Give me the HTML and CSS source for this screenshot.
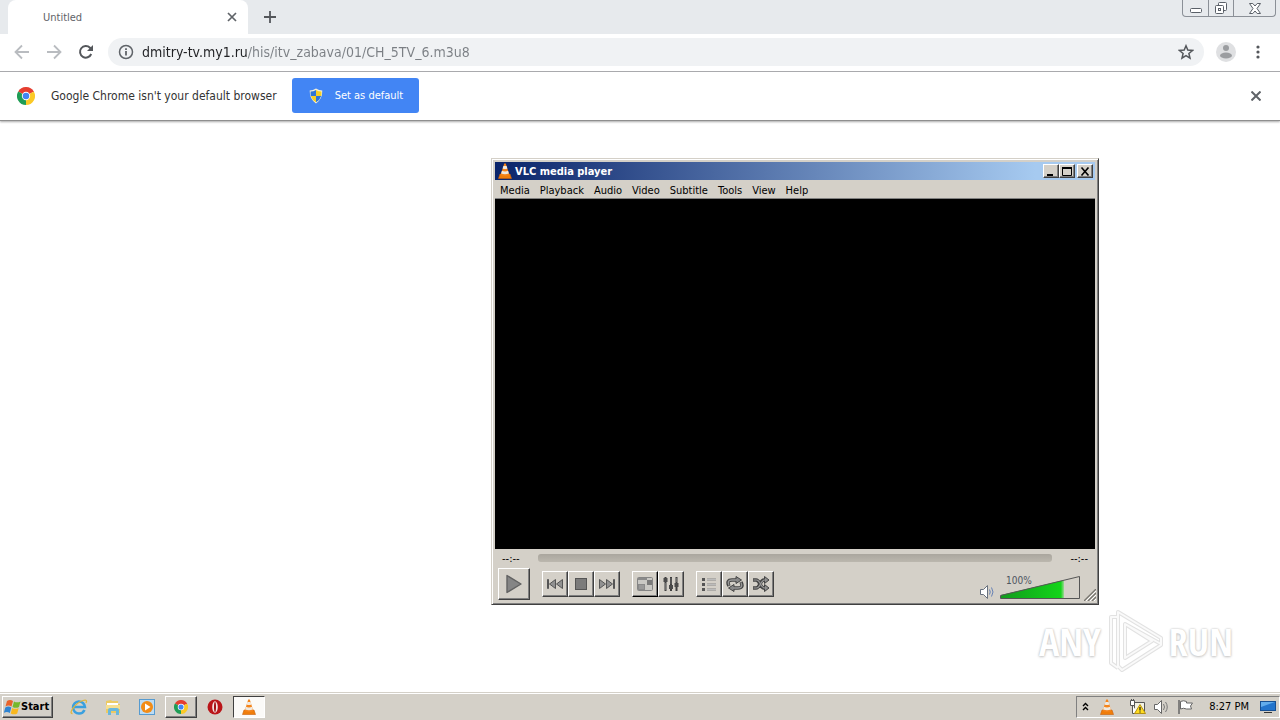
FILE: index.html
```html
<!DOCTYPE html>
<html lang="en">
<head>
    <meta charset="UTF-8">
    <meta name="viewport" content="width=device-width, initial-scale=1.0">
    <title>Untitled</title>
    <link rel="stylesheet" href="styles.css">
</head>
<body>
    <!-- shared icons -->
    <svg class="icon-defs" aria-hidden="true">
        <symbol id="cone" viewBox="0 0 16 16">
            <path d="M3 11h10l1.500 4.500h-13z" fill="#f07d0a" stroke="#c9600a" stroke-width=".6"/>
            <path d="M7.200 .5h1.600l3.600 11.500q-4.400 2.200-8.800 0z" fill="#f5841a"/>
            <path d="M6.400 3h3.200l.8 2.600q-2.400 1-4.800 0zM4.900 7.800q3.100 1.200 6.200 0l.8 2.600q-3.900 1.600-7.800 0z" fill="#f0e9df"/>
        </symbol>
        <symbol id="chrome" viewBox="0 0 16 16">
            <path d="M8 8L1.070 4A8 8 0 0 1 14.930 4z" fill="#e53e30"/>
            <path d="M8 8l6.930-4A8 8 0 0 1 8 16z" fill="#fbc926"/>
            <path d="M8 8v8A8 8 0 0 1 1.070 4z" fill="#1f9d55"/>
            <path d="M8 4.200h6.930L14.500 3.500H8z" fill="#e53e30"/>
            <circle cx="8" cy="8" r="3.700" fill="#fff"/>
            <circle cx="8" cy="8" r="2.900" fill="#4285f4"/>
        </symbol>
    </svg>

    <!-- browser -->
    <header class="tab-strip">
        <div class="tab">
            <span class="tab-title">Untitled</span>
            <button class="icon-button tab-close" aria-label="Close tab">
                <svg width="10" height="10" viewBox="0 0 10 10"><path d="M1 1l8 8M9 1L1 9" stroke="#5f6368" stroke-width="1.700"/></svg>
            </button>
        </div>
        <button class="icon-button new-tab" aria-label="New tab">
            <svg width="12" height="12" viewBox="0 0 12 12"><path d="M6 0v12M0 6h12" stroke="#54575b" stroke-width="1.800"/></svg>
        </button>
        <div class="window-buttons">
            <button class="window-button" aria-label="Minimize">
                <svg width="14" height="14" viewBox="0 0 14 14"><rect x="1.500" y="7.500" width="11" height="4" rx="1" fill="#fff" stroke="#5a6068"/></svg>
            </button>
            <button class="window-button" aria-label="Restore">
                <svg width="14" height="14" viewBox="0 0 14 14"><rect x="4.500" y="1.500" width="8" height="8" rx="1" fill="#fff" stroke="#5a6068"/><rect x="1.500" y="4.500" width="8" height="8" rx="1" fill="#fff" stroke="#5a6068"/><rect x="4.500" y="7.500" width="2" height="2" fill="none" stroke="#5a6068"/></svg>
            </button>
            <button class="window-button wide" aria-label="Close">
                <svg width="14" height="14" viewBox="0 0 14 14"><path d="M1.500 2.500h3.300L7 5l2.200-2.500h3.300L9 7.500l3.500 5H9.200L7 10l-2.200 2.500H1.500l3.500-5z" fill="#fff" stroke="#5a6068"/></svg>
            </button>
        </div>
    </header>

    <nav class="toolbar">
        <button class="icon-button" aria-label="Back">
            <svg width="16" height="16" viewBox="0 0 16 16"><path d="M15 8H2M8 1.500L1.500 8 8 14.500" fill="none" stroke="#b9bcc0" stroke-width="1.800"/></svg>
        </button>
        <button class="icon-button" aria-label="Forward">
            <svg width="16" height="16" viewBox="0 0 16 16"><path d="M1 8h13M8 1.500L14.500 8 8 14.500" fill="none" stroke="#b9bcc0" stroke-width="1.800"/></svg>
        </button>
        <button class="icon-button" aria-label="Reload">
            <svg width="16" height="16" viewBox="0 0 16 16"><path d="M13.200 10A5.800 5.800 0 1 1 12 3.800L13.500 5.500" fill="none" stroke="#54575b" stroke-width="2"/><path d="M15 1v6H9z" fill="#54575b"/></svg>
        </button>
        <div class="address-bar">
            <svg width="16" height="16" viewBox="0 0 16 16"><circle cx="8" cy="8" r="6.500" fill="none" stroke="#5f6368" stroke-width="1.500"/><path d="M8 7v4.500M8 4.200v1.700" stroke="#5f6368" stroke-width="1.800"/></svg>
            <input class="address" type="text" aria-label="Address" value="dmitry-tv.my1.ru/his/itv_zabava/01/CH_5TV_6.m3u8">
            <button class="icon-button star" aria-label="Bookmark">
                <svg width="16" height="16" viewBox="0 0 16 16"><path d="M8 1.800l1.800 4.300 4.700.4-3.600 3 1.100 4.600L8 11.600l-4 2.500 1.100-4.600-3.600-3 4.700-.4z" fill="none" stroke="#54575b" stroke-width="1.500"/></svg>
            </button>
        </div>
        <button class="icon-button profile" aria-label="Profile">
            <svg width="20" height="20" viewBox="0 0 20 20"><circle cx="10" cy="10" r="10" fill="#dfe0e2"/><circle cx="10" cy="6" r="3" fill="#9b9da0"/><ellipse cx="10" cy="13.500" rx="6" ry="3" fill="#9b9da0"/></svg>
        </button>
        <button class="icon-button more" aria-label="Menu">
            <svg width="4" height="14" viewBox="0 0 4 14" fill="#54575b"><circle cx="2" cy="2" r="1.600"/><circle cx="2" cy="7" r="1.600"/><circle cx="2" cy="12" r="1.600"/></svg>
        </button>
    </nav>

    <div class="infobar">
        <svg width="18" height="18"><use href="#chrome"/></svg>
        <span class="infobar-text">Google Chrome isn't your default browser</span>
        <button class="default-button">
            <svg width="14" height="16" viewBox="0 0 14 16"><path d="M7 .5q3 2 6.300 2Q13.500 11 7 15.500.5 11 .7 2.500 4 2.500 7 .5z" fill="#f3f0d8"/><path d="M7 2v6H1.800q-.4-2-.2-4.500Q4.500 3.500 7 2zM7 8h5.200Q11 12 7 14.300z" fill="#2f75d6"/><path d="M7 2q2.500 1.500 5.400 1.500.2 2.500-.2 4.500H7zM7 8v6.300Q3 12 1.800 8z" fill="#f6cf25"/></svg>
            Set as default
        </button>
        <button class="icon-button infobar-close" aria-label="Dismiss">
            <svg width="10" height="10" viewBox="0 0 10 10"><path d="M.5.5l9 9M9.500.5l-9 9" stroke="#5f6368" stroke-width="2"/></svg>
        </button>
    </div>

    <main class="page"></main>

    <!-- media player window -->
    <section class="player">
        <div class="player-title">
            <svg width="16" height="16"><use href="#cone"/></svg>
            <span>VLC media player</span>
            <div class="title-buttons">
                <button class="raised title-button" aria-label="Minimize"><svg width="10" height="9" viewBox="0 0 10 9"><path d="M1 7h6v2H1z"/></svg></button>
                <button class="raised title-button" aria-label="Maximize"><svg width="10" height="9" viewBox="0 0 10 9"><path d="M.5 1h9M.5.500v8h9v-8" fill="none" stroke="#000"/><path d="M0 0h10v2H0z"/></svg></button>
                <button class="raised title-button close" aria-label="Close"><svg width="10" height="9" viewBox="0 0 10 9"><path d="M1.500.5l7 8M8.500.5l-7 8" stroke="#000" stroke-width="1.600"/></svg></button>
            </div>
        </div>
        <div class="menu-bar">
            <button>Media</button>
            <button>Playback</button>
            <button>Audio</button>
            <button>Video</button>
            <button>Subtitle</button>
            <button>Tools</button>
            <button>View</button>
            <button>Help</button>
        </div>
        <div class="video"></div>
        <div class="seek-row">
            <span>--:--</span>
            <input class="seek" type="range" aria-label="Position" value="0">
            <span>--:--</span>
        </div>
        <div class="controls">
            <button class="raised play" aria-label="Play">
                <svg width="18" height="20" viewBox="0 0 18 20"><path d="M2 1.500L16 10 2 18.500z" fill="#858585" stroke="#626262" stroke-width="1.400" stroke-linejoin="round"/></svg>
            </button>
            <div class="button-group">
                <button class="raised control" aria-label="Previous">
                    <svg width="18" height="12" viewBox="0 0 18 12" fill="#919191" stroke="#555"><path d="M1.500 1.500v9h1v-9zM9.500 1.500v9L3.500 6zM16.500 1.500v9L10.500 6z"/></svg>
                </button>
                <button class="raised control" aria-label="Stop">
                    <svg width="14" height="14" viewBox="0 0 14 14"><rect x="1.500" y="1.500" width="11" height="11" fill="#7b7b7b" stroke="#555"/></svg>
                </button>
                <button class="raised control" aria-label="Next">
                    <svg width="18" height="12" viewBox="0 0 18 12" fill="#919191" stroke="#555"><path d="M1.500 1.500v9L7.500 6zM8.500 1.500v9L14.500 6zM15.500 1.500v9h1v-9z"/></svg>
                </button>
            </div>
            <div class="button-group">
                <button class="raised control focused" aria-label="Fullscreen">
                    <svg width="16" height="14" viewBox="0 0 16 14"><rect x=".5" y=".5" width="15" height="13" rx="1" fill="#c9c8c4" stroke="#858585"/><path d="M1 1h9v2H1zM1 7h7v6H1z" fill="#8a8a8a"/><path d="M10 3h5v5h-5z" fill="#7a7a7a"/><path d="M2 8h5v4H2z" fill="#999"/></svg>
                </button>
                <button class="raised control" aria-label="Equalizer">
                    <svg width="16" height="16" viewBox="0 0 16 16"><path d="M2.500 1v14M8 1v14M13.500 1v14" stroke="#3f3f3f" stroke-width="2"/><path d="M.5 2h4v4h-4zM6 9h4v4H6zM11.500 7h4v4h-4z" fill="#4b4b4b"/><path d="M2.500 7v7M8 2v6M13.500 2v4" stroke="#888" stroke-width=".6"/></svg>
                </button>
            </div>
            <div class="button-group">
                <button class="raised control" aria-label="Playlist">
                    <svg width="16" height="14" viewBox="0 0 16 14"><path d="M1 1h3v3H1zM1 6h3v3H1zM1 11h3v3H1z" fill="#555"/><path d="M6 2.500h9M6 7.500h9M6 12.500h9" stroke="#888" stroke-width="2"/><path d="M6 2.500h9M6 7.500h9M6 12.500h9" stroke="#ddd" stroke-width=".6"/></svg>
                </button>
                <button class="raised control" aria-label="Loop">
                    <svg width="18" height="16" viewBox="0 0 18 16" fill="none"><path d="M3 10Q0 4 6 4h5M15 6q3 6-3 6H7" stroke="#444" stroke-width="3.500"/><path d="M10 .5L15.500 4 10 7.500zM8 8.500L2.500 12 8 15.500z" fill="#888" stroke="#444"/><path d="M3 9.500Q0.500 4 6 4h5M15 6.500q2.500 5.500-3 5.500H7" stroke="#999" stroke-width="1.300"/></svg>
                </button>
                <button class="raised control" aria-label="Shuffle">
                    <svg width="18" height="16" viewBox="0 0 18 16" fill="none"><path d="M1 4h3q2 0 4 4t4 4h2M1 12h3q2 0 4-4t4-4h2" stroke="#444" stroke-width="3.500"/><path d="M12.500 .5L17 4l-4.500 3.500zM12.500 8.500L17 12l-4.500 3.500z" fill="#888" stroke="#444"/><path d="M1.500 4h3q2 0 4 4t4 4h2M1.500 12h3q2 0 4-4t4-4h2" stroke="#999" stroke-width="1.200"/></svg>
                </button>
            </div>
            <div class="volume">
                <svg width="14" height="14" viewBox="0 0 14 14"><path d="M.5 4.500h3l4-4v13l-4-4h-3z" fill="#fff" stroke="#68717e"/><path d="M9.500 4.500q1.500 2.500 0 5M11.500 2.500q3 4.500 0 9" fill="none" stroke="#6681b5"/></svg>
                <div class="volume-slider">
                    <svg width="80" height="24" viewBox="0 0 80 24">
                        <defs><linearGradient id="level"><stop offset="0" stop-color="#129b1d"/><stop offset=".95" stop-color="#13d51a"/><stop offset="1" stop-color="#9cd894"/></linearGradient></defs>
                        <path d="M1 20L64 5v18H1z" fill="url(#level)"/>
                        <path d="M.5 20.500l79-19v22H.5z" fill="none" stroke="#555"/>
                    </svg>
                    <span class="volume-value">100%</span>
                    <input class="volume-input" type="range" aria-label="Volume" min="0" max="125" value="100">
                </div>
            </div>
        </div>
        <svg class="grip" width="12" height="12" viewBox="0 0 12 12"><path d="M0 12L12 0M4 12l8-8M8 12l4-4" stroke="#77756f" stroke-width="1.300"/><path d="M2 12L12 2M6 12l6-6M10 12l2-2" stroke="#fff"/></svg>
    </section>

    <!-- watermark -->
    <div class="watermark">
        <span>ANY</span>
        <svg width="58" height="64" viewBox="0 0 58 64" fill="none" stroke-linejoin="round">
            <path d="M12 8H5v46l7 5M12 3l43 26v7L16 61l-4-4zM19 15v34l27-17zM19 15l36 20" stroke="#e2e2e2" stroke-width="4"/>
            <path d="M12 8H5v46l7 5M12 3l43 26v7L16 61l-4-4zM19 15v34l27-17zM19 15l36 20" stroke="#fafafa" stroke-width="2"/>
        </svg>
        <span>RUN</span>
    </div>

    <!-- taskbar -->
    <footer class="taskbar">
        <button class="raised start">
            <svg width="17" height="16" viewBox="0 0 17 16"><path d="M3 2q3-2 6 0L7.500 7.500q-3-2-6 0z" fill="#e8622a"/><path d="M10 2.500q3 1.700 6.500 0L15 8q-3 1.700-6.500 0z" fill="#76b82c"/><path d="M1.300 8.500q3-2 6 0L5.800 14q-3-2-6 0z" fill="#2e83d1"/><path d="M8.200 9q3 1.700 6.500 0l-1.500 5.500q-3 1.700-6.500 0z" fill="#f9b81e"/></svg>
            Start
        </button>
        <div class="quick-launch">
            <button class="task" aria-label="Internet Explorer">
                <svg width="18" height="18" viewBox="0 0 18 18" fill="none"><path d="M14.500 12Q13 15.500 9 15.500A6 6 0 1 1 15 9H4" stroke="#3aa0df" stroke-width="2.500"/><path d="M2.500 15.500C-2 16 5 5 13 2.500q5-1.500 3 2.500" stroke="#e1b53a" stroke-width="1.300"/></svg>
            </button>
            <button class="task" aria-label="Explorer">
                <svg width="18" height="18" viewBox="0 0 18 18"><path d="M2 3l5-1 1 1h6v3h2v9H2z" fill="#ecca62"/><path d="M3 5h11v3H3z" fill="#fff"/><path d="M2 7h14v4H2z" fill="#f6df91"/><path d="M4 17v-5q0-2 2-2h7q2 0 2 2v5h-3v-4H7v4z" fill="#69b7dc"/></svg>
            </button>
            <button class="task" aria-label="Media Player">
                <svg width="18" height="18" viewBox="0 0 18 18"><rect x="1.500" y="1.500" width="15" height="15" fill="#bcdcf4" stroke="#569bd0"/><circle cx="9" cy="9" r="6" fill="#f28c17"/><path d="M7 5.500L12.500 9 7 12.500z" fill="#fff"/></svg>
            </button>
            <button class="task raised" aria-label="Chrome">
                <svg width="14" height="14"><use href="#chrome"/></svg>
            </button>
            <button class="task" aria-label="Opera">
                <svg width="16" height="16" viewBox="0 0 16 16"><circle cx="8" cy="8" r="7.500" fill="#ba1519"/><ellipse cx="8" cy="8" rx="2.800" ry="5.800" fill="#f4e4e2"/><ellipse cx="8" cy="8" rx="1" ry="5" fill="#a31013"/></svg>
            </button>
            <button class="task pressed" aria-label="VLC media player">
                <svg width="16" height="16"><use href="#cone"/></svg>
            </button>
        </div>
        <div class="tray">
            <svg width="7" height="9" viewBox="0 0 7 9"><path d="M1 4l2.500-2.500L6 4M1 8l2.500-2.500L6 8" fill="none" stroke="#000" stroke-width="1.400"/></svg>
            <svg class="tray-cone" width="16" height="16"><use href="#cone"/></svg>
            <svg width="17" height="16" viewBox="0 0 17 16"><path d="M5.500 3.500h10v9h-10z" fill="#f4f2e4" stroke="#555"/><path d="M1.500 1.500h4v5h-4zM3.500 6.500v8h6M2.500 0v2M4.500 0v2" fill="#fff" stroke="#555"/><path d="M11 5.500l5.500 9h-11z" fill="#ffdc20" stroke="#b49112"/><path d="M11 8v3.500M11 12.500v1" stroke="#222" stroke-width="1.300"/></svg>
            <svg width="17" height="16" viewBox="0 0 17 16"><path d="M1.500 5.500h3l4-4v13l-4-4h-3z" fill="#fff" stroke="#666"/><path d="M10.500 5q2 3 0 6M12.500 3q3.500 5 0 10" fill="none" stroke="#777"/></svg>
            <svg width="17" height="16" viewBox="0 0 17 16"><path d="M2 1v14" stroke="#666" stroke-width="1.500"/><path d="M3.500 2.500q3-1.500 6 0v1.500h6l-2 3 1 3h-5q-3-1.500-6 0z" fill="#fff" stroke="#666"/></svg>
            <time class="clock">8:27 PM</time>
            <svg width="16" height="14" viewBox="0 0 16 14"><rect x=".5" y="1.500" width="15" height="9" fill="#2374cc" stroke="#174f92"/><path d="M1 2h14L1 7z" fill="#62acec"/><path d="M4 12h8v1H4z" fill="#333"/></svg>
        </div>
    </footer>
</body>
</html>
```
FILE: styles.css
```css
* {
    margin: 0;
    padding: 0;
    box-sizing: border-box;
}

body {
    display: flex;
    flex-direction: column;
    height: 100vh;
    overflow: hidden;
    background-color: #fff;
    color: #000;
    font-family: Tahoma, "DejaVu Sans Condensed", "Noto Sans", sans-serif;
    font-size: 11px;
}

button {
    border: none;
    background: none;
    color: inherit;
    font: inherit;
}

svg {
    display: block;
    flex-shrink: 0;
}

.icon-defs {
    position: absolute;
    width: 0;
    height: 0;
}

.icon-button {
    display: flex;
    flex-shrink: 0;
    align-items: center;
    justify-content: center;
    width: 16px;
    height: 16px;
}

/* tab strip */
.tab-strip {
    display: flex;
    align-items: center;
    height: 34px;
    padding: 0 4px 0 8px;
    background-color: #e7eaed;
}

.tab {
    display: flex;
    align-items: center;
    justify-content: space-between;
    width: 240px;
    height: 34px;
    padding: 0 8px 0 35px;
    border-radius: 8px 8px 0 0;
    background-color: #fff;
}

.tab-title {
    color: #5f6368;
}

.new-tab {
    margin-left: 14px;
}

.window-buttons {
    display: flex;
    align-self: flex-start;
    height: 17px;
    margin-left: auto;
    border: 1px solid #8b9097;
    border-top: none;
    border-radius: 0 0 4px 4px;
}

.window-button {
    display: flex;
    justify-content: center;
    align-items: center;
    width: 25px;
}

.window-button + .window-button {
    border-left: 1px solid #8b9097;
}

.window-button.wide {
    width: 42px;
}

/* toolbar */
.toolbar {
    display: flex;
    align-items: center;
    gap: 16px;
    height: 38px;
    padding: 0 20px 1px 14px;
    border-bottom: 1px solid #a9abae;
}

.address-bar {
    display: flex;
    flex: 1;
    align-items: center;
    gap: 8px;
    height: 28px;
    margin-left: -2px;
    padding: 0 10px;
    border-radius: 14px;
    background-color: #f0f2f4;
}

/* host part is dark, path is grey */
.address {
    flex: 1;
    height: 24px;
    border: none;
    outline: none;
    background: linear-gradient(90deg, #202124 106px, #7b7f84 106px);
    background-clip: text;
    -webkit-background-clip: text;
    -webkit-text-fill-color: transparent;
    font-family: Tahoma, "DejaVu Sans Condensed", "Noto Sans", sans-serif;
    font-size: 14px;
}

.profile {
    width: 20px;
    margin: 0 4px 0 -4px;
}

.more {
    width: 4px;
}

/* infobar */
.infobar {
    display: flex;
    align-items: center;
    height: 49px;
    padding: 0 16px 1px 17px;
    border-bottom: 1px solid #8f8f8f;
    box-shadow: 0 1px 2px #aaa;
}

.infobar-text {
    margin: 0 15px 0 16px;
    color: #333;
    font-size: 12px;
}

.default-button {
    display: flex;
    align-items: center;
    gap: 12px;
    height: 35px;
    padding: 0 16px 0 17px;
    border-radius: 3px;
    background-color: #4285f4;
    color: #fff;
}

.infobar-close {
    margin-left: auto;
}

.page {
    flex: 1;
}

/* classic raised edge */
.raised {
    border: 1px solid;
    border-color: #fff #404040 #404040 #fff;
    background-color: #d4d0c8;
    box-shadow: inset -1px -1px #808080;
}

/* player window */
.player {
    position: absolute;
    top: 158px;
    left: 491px;
    width: 608px;
    padding: 3px;
    border: 1px solid;
    border-color: #d4d0c8 #404040 #404040 #d4d0c8;
    background-color: #d4d0c8;
    box-shadow: inset 1px 1px #fff, inset -1px -1px #808080;
}

.player-title {
    display: flex;
    align-items: center;
    gap: 2px;
    height: 18px;
    padding: 0 2px;
    background: linear-gradient(90deg, #0a246a, #a6caf0 90%);
    color: #fff;
    font-weight: bold;
}

.title-buttons {
    display: flex;
    margin-left: auto;
}

.title-button {
    display: flex;
    align-items: center;
    justify-content: center;
    width: 16px;
    height: 14px;
}

.title-button.close {
    margin-left: 2px;
}

.menu-bar {
    display: flex;
    align-items: center;
    gap: 10px;
    height: 19px;
    padding: 2px 5px 0;
    border-bottom: 1px solid #808080;
}

.video {
    height: 350px;
    background-color: #000;
}

.seek-row {
    display: flex;
    align-items: center;
    gap: 18px;
    height: 18px;
    padding: 0 7px;
}

.seek {
    flex: 1;
    height: 8px;
    appearance: none;
    border-radius: 3px;
    background: linear-gradient(#aaa69e, #bbb7ae);
}

.seek::-webkit-slider-thumb {
    appearance: none;
    width: 0;
    height: 0;
}

.controls {
    display: flex;
    align-items: center;
    gap: 12px;
    height: 34px;
    padding: 0 15px 0 3px;
}

.play,
.control {
    display: flex;
    align-items: center;
    justify-content: center;
}

.play {
    width: 32px;
    height: 32px;
}

.control {
    width: 26px;
    height: 26px;
}

.control.focused {
    border-right-color: #000;
    border-bottom-color: #000;
}

.button-group {
    display: flex;
}

.volume {
    display: flex;
    align-items: flex-end;
    gap: 6px;
    margin-top: 5px;
    margin-left: auto;
}

.volume-slider {
    position: relative;
}

.volume-value {
    position: absolute;
    top: 0;
    left: 6px;
    color: #4d5560;
    font-size: 10px;
}

.volume-input {
    position: absolute;
    inset: 0;
    width: 100%;
    opacity: 0;
}

.grip {
    position: absolute;
    right: 2px;
    bottom: 3px;
}

/* watermark */
.watermark {
    position: absolute;
    right: 47px;
    bottom: 47px;
    display: flex;
    align-items: center;
    gap: 5px;
    color: #fff;
    font-family: "Open Sans Condensed", "Roboto Condensed", "Liberation Sans Narrow", sans-serif;
    font-size: 38px;
    font-weight: 300;
    text-shadow: 0 0 2px #bbb, 0 1px 3px #ccc;
}

/* taskbar */
.taskbar {
    display: flex;
    align-items: center;
    height: 28px;
    padding: 2px 0 2px 2px;
    border-top: 1px solid #d4d0c8;
    background-color: #d4d0c8;
    box-shadow: inset 0 1px #fff;
}

.start {
    display: flex;
    align-items: center;
    height: 22px;
    padding: 0 3px 0 1px;
    font-size: 11px;
    font-weight: bold;
}

.quick-launch {
    display: flex;
    gap: 2px;
    margin-left: 10px;
}

.task {
    display: flex;
    align-items: center;
    justify-content: center;
    width: 32px;
    height: 22px;
}

.pressed {
    border: 1px solid;
    border-color: #404040 #fff #fff #404040;
    background-color: #fbfaf8;
}

.tray {
    display: flex;
    align-items: center;
    gap: 7px;
    height: 22px;
    margin-left: auto;
    padding: 0 3px 0 5px;
    border: 1px solid;
    border-color: #808080 #fff #fff #808080;
}

.tray-cone {
    margin-right: 7px;
    margin-left: 3px;
}

.clock {
    margin: 0 4px 0 8px;
}
```
